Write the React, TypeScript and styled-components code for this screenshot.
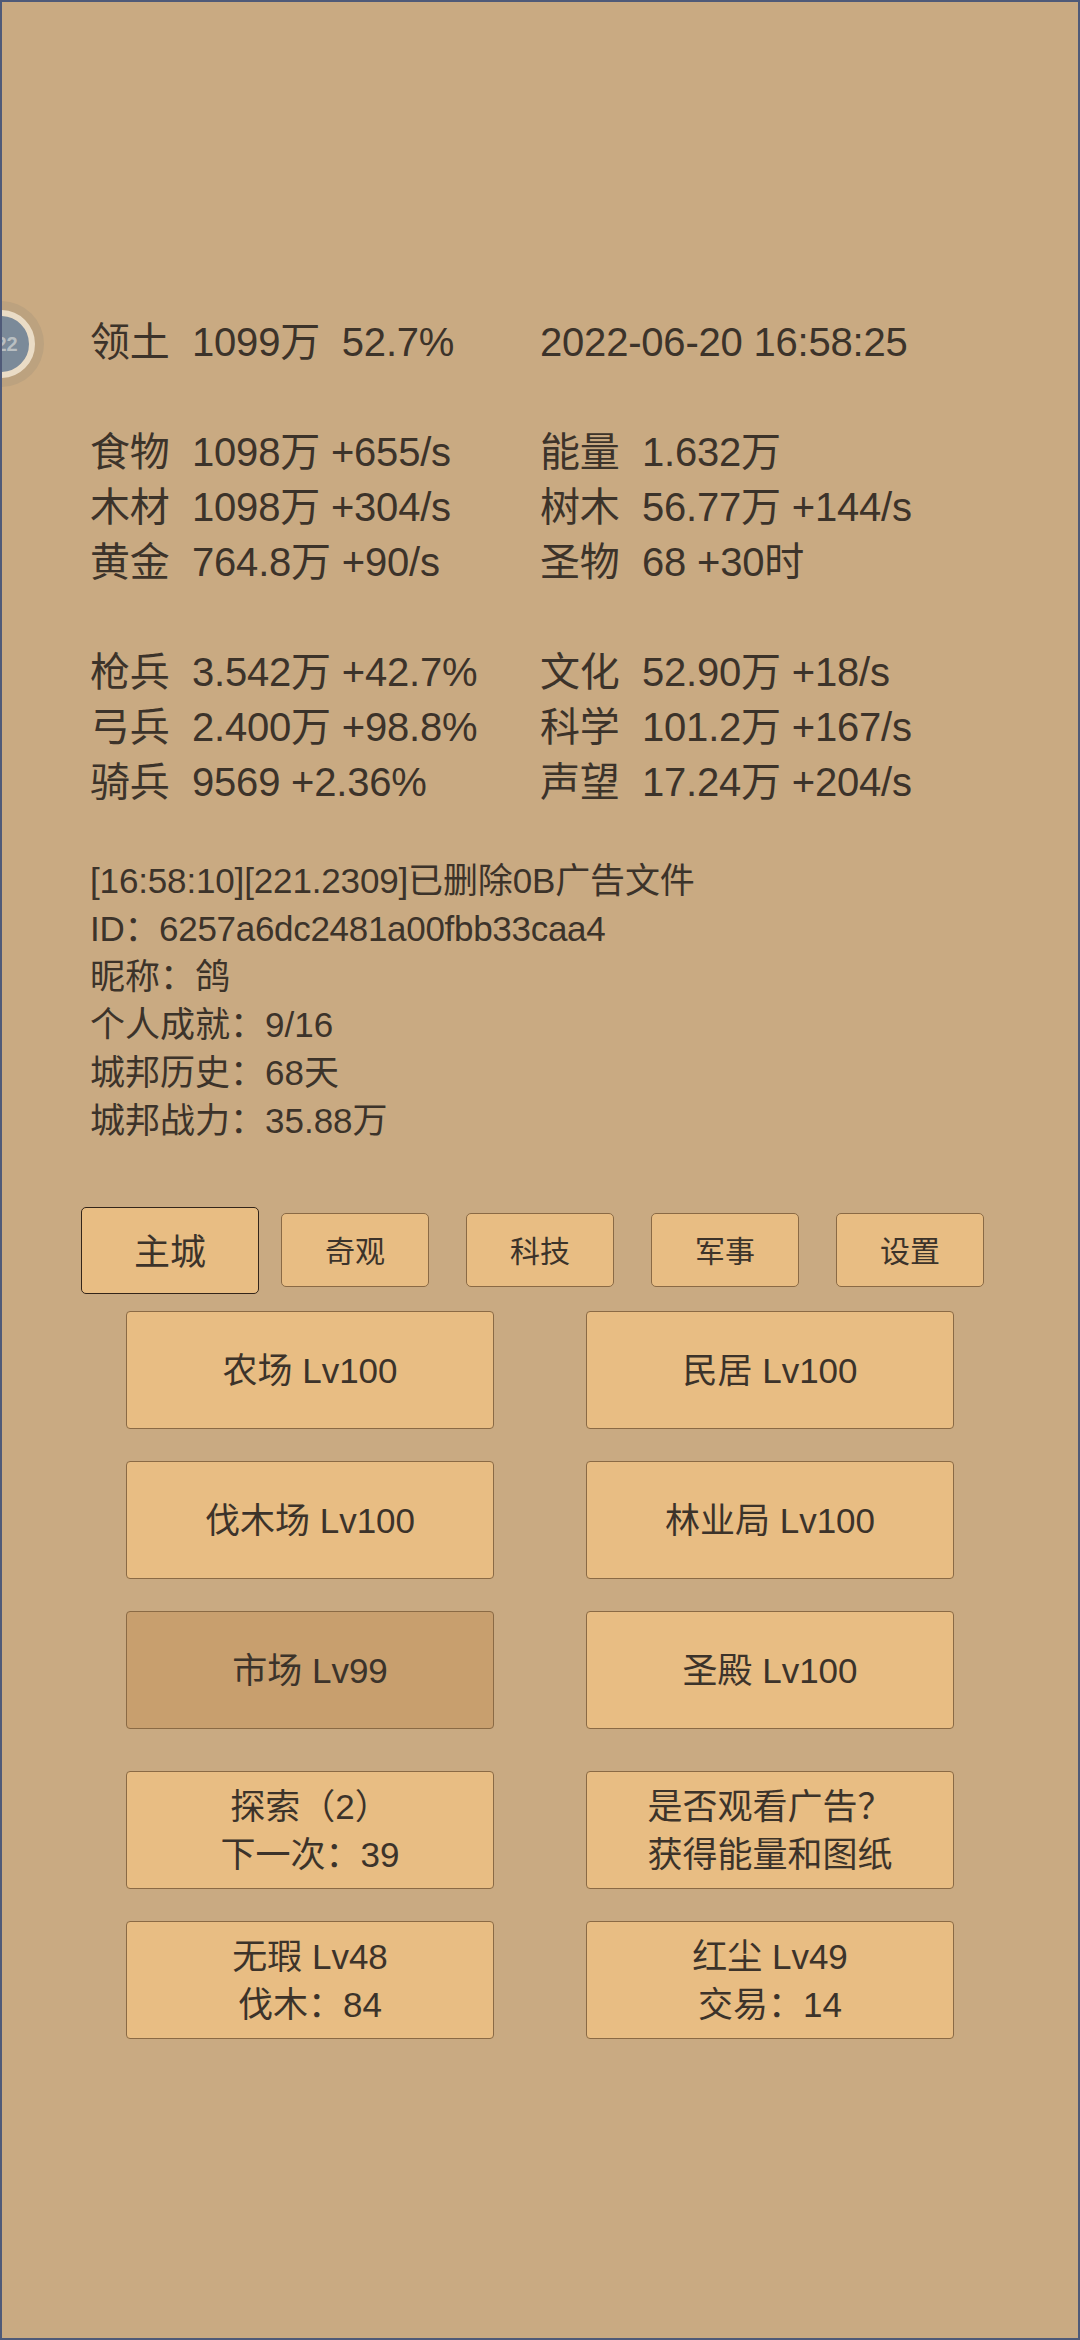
import React from "react";
import styled, { createGlobalStyle } from "styled-components";

const Global = createGlobalStyle`
  html, body {
    margin: 0;
    padding: 0;
    background: #c9aa82;
  }
`;

const Page = styled.div`
  position: relative;
  width: 1080px;
  height: 2340px;
  box-sizing: border-box;
  border: 2px solid #4f5a78;
  background: #c9aa82;
  color: #3c332a;
  font-family: "Liberation Sans", "Noto Sans CJK SC", sans-serif;
  overflow: hidden;
  padding-top: 313px;
`;

const Avatar = styled.div`
  position: absolute;
  left: -44px;
  top: 299px;
  width: 86px;
  height: 86px;
  border-radius: 50%;
  background: #bca27f;
  display: flex;
  align-items: center;
  justify-content: center;
`;

const AvatarRing = styled.div`
  width: 68px;
  height: 68px;
  box-sizing: border-box;
  border: 6px solid #eadcc6;
  border-radius: 50%;
  background: #7b8a99;
  color: #b9bfc2;
  font-size: 20px;
  font-weight: 700;
  display: flex;
  align-items: center;
  justify-content: center;
  padding-left: 11px;
`;

const Stats = styled.section`
  padding-left: 88px;
  margin-bottom: 47px;
  letter-spacing: -0.2px;
`;

const StatRow = styled.div`
  display: grid;
  grid-template-columns: 450px 1fr;
  height: 55px;
  align-items: center;
  font-size: 40px;
  line-height: 55px;
`;

const Spacer = styled.div`
  height: 55px;
`;

const Stat = styled.div`
  display: flex;
  height: 55px;
  white-space: pre;
`;

const Label = styled.span`
  width: 102px;
`;

const Log = styled.section`
  padding-left: 88px;
  font-size: 35px;
  line-height: 48px;
  margin-bottom: 62px;
`;

const LogLine = styled.div<{ $spacing?: number }>`
  letter-spacing: ${(p) => p.$spacing ?? 0}px;
`;

const Tabs = styled.nav`
  display: flex;
  align-items: center;
  padding-left: 79px;
  height: 86px;
  margin-bottom: 18px;
`;

const Tab = styled.div<{ $active?: boolean }>`
  box-sizing: border-box;
  width: ${(p) => (p.$active ? 178 : 148)}px;
  height: ${(p) => (p.$active ? 87 : 74)}px;
  margin-right: ${(p) => (p.$active ? 22 : 37)}px;
  padding-bottom: 3px;
  background: #e8bd83;
  border: ${(p) => (p.$active ? "1.5px solid #33251a" : "1px solid #8a6a45")};
  border-radius: 5px;
  font-size: ${(p) => (p.$active ? 36 : 30)}px;
  display: flex;
  align-items: center;
  justify-content: center;
`;

const Buildings = styled.div`
  display: grid;
  grid-template-columns: 368px 368px;
  column-gap: 92px;
  padding-left: 124px;
`;

const Card = styled.div<{ $dim?: boolean; $after?: number }>`
  box-sizing: border-box;
  height: 118px;
  margin-bottom: ${(p) => p.$after ?? 32}px;
  padding-top: 2px;
  background: ${(p) => (p.$dim ? "#c89f6e" : "#e8bd83")};
  border: 1px solid #8a6a45;
  border-radius: 4px;
  font-size: 35px;
  line-height: 48px;
  text-align: center;
  display: flex;
  flex-direction: column;
  align-items: center;
  justify-content: center;
`;

const left = [
  ["领土", "1099万  52.7%"],
  null,
  ["食物", "1098万 +655/s"],
  ["木材", "1098万 +304/s"],
  ["黄金", "764.8万 +90/s"],
  null,
  ["枪兵", "3.542万 +42.7%"],
  ["弓兵", "2.400万 +98.8%"],
  ["骑兵", "9569 +2.36%"],
];

const right = [
  ["", "2022-06-20 16:58:25"],
  null,
  ["能量", "1.632万"],
  ["树木", "56.77万 +144/s"],
  ["圣物", "68 +30时"],
  null,
  ["文化", "52.90万 +18/s"],
  ["科学", "101.2万 +167/s"],
  ["声望", "17.24万 +204/s"],
];

const logs = [
  { text: "[16:58:10][221.2309]已删除0B广告文件", spacing: -0.15 },
  { text: "ID：6257a6dc2481a00fbb33caa4", spacing: -0.3 },
  { text: "昵称：鸽" },
  { text: "个人成就：9/16" },
  { text: "城邦历史：68天" },
  { text: "城邦战力：35.88万" },
];

const cards = [
  { lines: ["农场 Lv100"] },
  { lines: ["民居 Lv100"] },
  { lines: ["伐木场 Lv100"] },
  { lines: ["林业局 Lv100"] },
  { lines: ["市场 Lv99"], dim: true, after: 42 },
  { lines: ["圣殿 Lv100"], after: 42 },
  { lines: ["探索（2）", "下一次：39"] },
  { lines: ["是否观看广告？", "获得能量和图纸"] },
  { lines: ["无瑕 Lv48", "伐木：84"] },
  { lines: ["红尘 Lv49", "交易：14"] },
];

export default function App() {
  return (
    <Page>
      <Global />
      <Avatar>
        <AvatarRing>22</AvatarRing>
      </Avatar>
      <Stats>
        {left.map((l, i) => {
          const r = right[i];
          if (!l || !r) return <Spacer key={i} />;
          return (
            <StatRow key={i}>
              <Stat>
                <Label>{l[0]}</Label>
                {l[1]}
              </Stat>
              <Stat>
                {r[0] && <Label>{r[0]}</Label>}
                {r[1]}
              </Stat>
            </StatRow>
          );
        })}
      </Stats>
      <Log>
        {logs.map((l) => (
          <LogLine key={l.text} $spacing={l.spacing}>
            {l.text}
          </LogLine>
        ))}
      </Log>
      <Tabs>
        <Tab $active>主城</Tab>
        <Tab>奇观</Tab>
        <Tab>科技</Tab>
        <Tab>军事</Tab>
        <Tab>设置</Tab>
      </Tabs>
      <Buildings>
        {cards.map((c) => (
          <Card key={c.lines[0]} $dim={c.dim} $after={c.after}>
            {c.lines.map((t) => (
              <div key={t}>{t}</div>
            ))}
          </Card>
        ))}
      </Buildings>
    </Page>
  );
}
